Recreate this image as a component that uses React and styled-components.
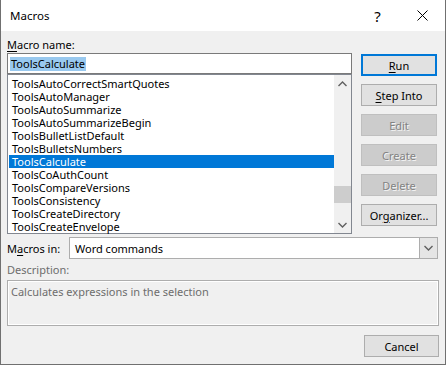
import React from 'react';
import styled, { createGlobalStyle } from 'styled-components';

const GlobalStyle = createGlobalStyle`
    html, body {
        margin: 0;
        padding: 0;
        background: #f0f0f0;
    }
    body {
        font-family: "Noto Sans", "Open Sans", Arial, sans-serif;
        font-size: 11px;
        color: #000;
    }
`

const Window = styled.div`
    width: 446px;
    height: 365px;
    box-sizing: border-box;
    border: 1px solid #707070;
    border-top: none;
    background: #f0f0f0;
    display: flex;
    flex-direction: column;
`

const TitleBar = styled.div`
    height: 31px;
    background: #fff;
    display: flex;
    align-items: center;
    padding-left: 9px;
    font-size: 11.5px;
`

const Title = styled.div`
    flex: 1;
`

const TitleButton = styled.div`
    width: 45px;
    height: 31px;
    display: flex;
    align-items: center;
    justify-content: center;
    font-size: 15px;
`

const Body = styled.div`
    flex: 1;
    padding: 6px 7px 0 6px;
    display: flex;
    flex-direction: column;
`

const Top = styled.div`
    display: flex;
`

const LeftCol = styled.div`
    width: 345px;
    display: flex;
    flex-direction: column;
`

const RightCol = styled.div`
    margin-left: 9px;
    padding-top: 17px;
    display: flex;
    flex-direction: column;
    gap: 8px;
`

const Label = styled.div`
    height: 16px;
    line-height: 16px;
    color: ${p => (p.muted ? '#6d6d6d' : '#000')};
`

const U = styled.span`
    text-decoration: underline;
    text-underline-offset: 2px;
`

const NameInput = styled.div`
    height: 21px;
    box-sizing: border-box;
    border: 1px solid #7a7a7a;
    background: #fff;
    padding: 2px 2px;
    display: flex;
    align-items: center;
`

const SelText = styled.span`
    background: #99c9ef;
    line-height: 14px;
    padding: 0 1px;
`

const ListBox = styled.div`
    height: 160px;
    box-sizing: border-box;
    border: 1px solid #828790;
    background: #fff;
    display: flex;
`

const Rows = styled.div`
    flex: 1;
    padding: 2px 0 0 1px;
`

const Row = styled.div`
    height: 13px;
    line-height: 13px;
    padding-left: 3px;
    background: ${p => (p.selected ? '#0078d7' : 'transparent')};
    color: ${p => (p.selected ? '#fff' : '#000')};
    white-space: nowrap;
`

const ScrollBar = styled.div`
    width: 17px;
    background: #f0f0f0;
    display: flex;
    flex-direction: column;
    align-items: center;
`

const ScrollArrow = styled.div`
    height: 17px;
    width: 17px;
    display: flex;
    align-items: center;
    justify-content: center;
`

const Track = styled.div`
    flex: 1;
    width: 100%;
    position: relative;
`

const Thumb = styled.div`
    position: absolute;
    left: 0;
    right: 0;
    top: 94px;
    height: 17px;
    background: #cdcdcd;
`

const MacrosInRow = styled.div`
    display: flex;
    align-items: center;
    margin-top: 3px;
    height: 22px;
`

const MacrosInLabel = styled.div`
    width: 62px;
`

const Select = styled.div`
    flex: 1;
    height: 22px;
    box-sizing: border-box;
    border: 1px solid #adadad;
    background: #fff;
    display: flex;
    align-items: center;
    padding-left: 5px;
`

const SelectValue = styled.div`
    flex: 1;
`

const SelectArrow = styled.div`
    width: 17px;
    height: 20px;
    background: #e5e5e5;
    border-left: 1px solid #adadad;
    display: flex;
    align-items: center;
    justify-content: center;
`

const DescLabel = styled(Label)`
    margin-top: 3px;
`

const DescBox = styled.div`
    margin-top: 2px;
    width: 432px;
    height: 46px;
    box-sizing: border-box;
    border: 1px solid #adadad;
    box-shadow: inset 1px 1px 0 #fff, inset -1px -1px 0 #fff;
    background: #f0f0f0;
    color: #6d6d6d;
    padding: 3px 0 0 3px;
`

const Footer = styled.div`
    display: flex;
    justify-content: flex-end;
    margin-top: 9px;
`

const Button = styled.div`
    width: 76px;
    height: 22px;
    box-sizing: border-box;
    border: ${p => (p.primary ? '2px solid #0078d7' : p.disabled ? '1px solid #bfbfbf' : '1px solid #adadad')};
    background: ${p => (p.disabled ? '#cccccc' : '#e1e1e1')};
    color: ${p => (p.disabled ? '#838383' : '#000')};
    display: flex;
    align-items: center;
    justify-content: center;
    text-shadow: ${p => (p.disabled ? '1px 1px 0 #f4f4f4' : 'none')};
`

const CancelButton = styled(Button)`
    width: 75px;
    margin-right: -1px;
`

const items = [
    'ToolsAutoCorrectSmartQuotes',
    'ToolsAutoManager',
    'ToolsAutoSummarize',
    'ToolsAutoSummarizeBegin',
    'ToolsBulletListDefault',
    'ToolsBulletsNumbers',
    'ToolsCalculate',
    'ToolsCoAuthCount',
    'ToolsCompareVersions',
    'ToolsConsistency',
    'ToolsCreateDirectory',
    'ToolsCreateEnvelope',
]

const Chevron = ({ up }) => (
    <svg width="9" height="6" viewBox="0 0 9 6">
        <path
            d={up ? 'M0.5 5 L4.5 1 L8.5 5' : 'M0.5 1 L4.5 5 L8.5 1'}
            fill="none"
            stroke="#606060"
            strokeWidth="1.4"
        />
    </svg>
)

export default function App() {
    return (
        <>
            <GlobalStyle />
            <Window>
                <TitleBar>
                    <Title>Macros</Title>
                    <TitleButton>?</TitleButton>
                    <TitleButton>
                        <svg width="11" height="11" viewBox="0 0 11 11">
                            <path d="M0.5 0.5 L10.5 10.5 M10.5 0.5 L0.5 10.5" stroke="#000" strokeWidth="1" />
                        </svg>
                    </TitleButton>
                </TitleBar>
                <Body>
                    <Top>
                        <LeftCol>
                            <Label><U>M</U>acro name:</Label>
                            <NameInput><SelText>ToolsCalculate</SelText></NameInput>
                            <ListBox>
                                <Rows>
                                    {items.map(item => (
                                        <Row key={item} selected={item === 'ToolsCalculate'}>{item}</Row>
                                    ))}
                                </Rows>
                                <ScrollBar>
                                    <ScrollArrow><Chevron up /></ScrollArrow>
                                    <Track><Thumb /></Track>
                                    <ScrollArrow><Chevron /></ScrollArrow>
                                </ScrollBar>
                            </ListBox>
                        </LeftCol>
                        <RightCol>
                            <Button primary><U>R</U>un</Button>
                            <Button><U>S</U>tep Into</Button>
                            <Button disabled>Edit</Button>
                            <Button disabled>Create</Button>
                            <Button disabled>Delete</Button>
                            <Button>Or<U>g</U>anizer...</Button>
                        </RightCol>
                    </Top>
                    <MacrosInRow>
                        <MacrosInLabel>M<U>a</U>cros in:</MacrosInLabel>
                        <Select>
                            <SelectValue>Word commands</SelectValue>
                            <SelectArrow><Chevron /></SelectArrow>
                        </Select>
                    </MacrosInRow>
                    <DescLabel muted>Description:</DescLabel>
                    <DescBox>Calculates expressions in the selection</DescBox>
                    <Footer>
                        <CancelButton>Cancel</CancelButton>
                    </Footer>
                </Body>
            </Window>
        </>
    )
}
